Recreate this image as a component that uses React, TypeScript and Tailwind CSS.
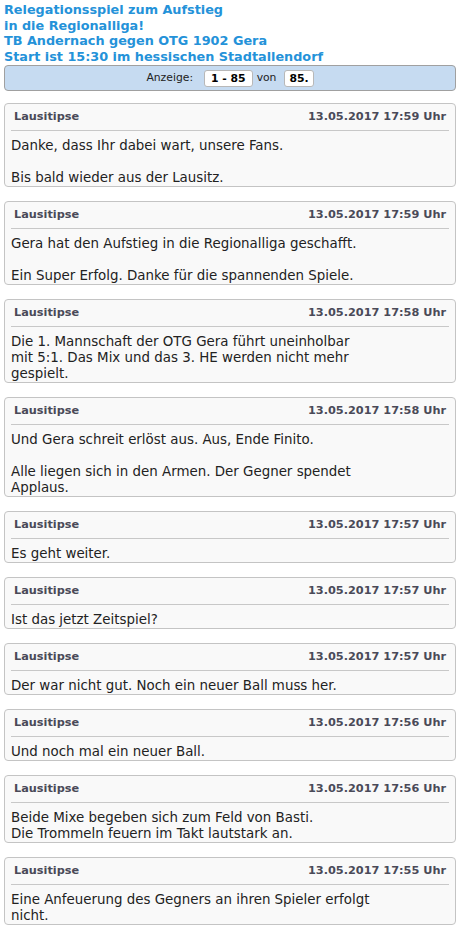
const posts: { date: string; lines: string[] }[] = [
  { date: "13.05.2017 17:59 Uhr", lines: ["Danke, dass Ihr dabei wart, unsere Fans.", "", "Bis bald wieder aus der Lausitz."] },
  { date: "13.05.2017 17:59 Uhr", lines: ["Gera hat den Aufstieg in die Regionalliga geschafft.", "", "Ein Super Erfolg. Danke für die spannenden Spiele."] },
  {
    date: "13.05.2017 17:58 Uhr",
    lines: ["Die 1. Mannschaft der OTG Gera führt uneinholbar", "mit 5:1. Das Mix und das 3. HE werden nicht mehr", "gespielt."],
  },
  {
    date: "13.05.2017 17:58 Uhr",
    lines: ["Und Gera schreit erlöst aus. Aus, Ende Finito.", "", "Alle liegen sich in den Armen. Der Gegner spendet", "Applaus."],
  },
  { date: "13.05.2017 17:57 Uhr", lines: ["Es geht weiter."] },
  { date: "13.05.2017 17:57 Uhr", lines: ["Ist das jetzt Zeitspiel?"] },
  { date: "13.05.2017 17:57 Uhr", lines: ["Der war nicht gut. Noch ein neuer Ball muss her."] },
  { date: "13.05.2017 17:56 Uhr", lines: ["Und noch mal ein neuer Ball."] },
  { date: "13.05.2017 17:56 Uhr", lines: ["Beide Mixe begeben sich zum Feld von Basti.", "Die Trommeln feuern im Takt lautstark an."] },
  { date: "13.05.2017 17:55 Uhr", lines: ["Eine Anfeuerung des Gegners an ihren Spieler erfolgt", "nicht."] },
]

function Post({ date, lines }: { date: string; lines: string[] }) {
  return (
    <div className="mb-[14px] rounded-[4px] border border-[#c4c4c4] bg-[#f9f9f9] px-[6px] pt-[5px]">
      <div className="flex justify-between border-b border-[#c8c8c8] pb-[5px] pl-[3px] pr-[3px] text-[11.3px] leading-[16px] font-bold text-[#4a4a58]">
        <span>Lausitipse</span>
        <span>{date}</span>
      </div>
      <div className="mt-[7px] text-[13.4px] leading-[16px] text-[#222]">
        {lines.map((l, i) => (
          <div key={i} className="h-[16px] whitespace-nowrap">
            {l}
          </div>
        ))}
      </div>
    </div>
  )
}

export default function App() {
  return (
    <div className="w-[460px] bg-white px-[4px] pt-[2px] font-['DejaVu_Sans',Verdana,sans-serif]">
      <div className="text-[12.8px] leading-[15.6px] font-bold text-[#2492d9]">
        Relegationsspiel zum Aufstieg
        <br />
        in die Regionalliga!
        <br />
        TB Andernach gegen OTG 1902 Gera
        <br />
        Start ist 15:30 im hessischen Stadtallendorf
      </div>
      <div className="mt-[1px] mb-[12px] flex h-[26px] items-center justify-center rounded-[4px] border border-[#a0a0a0] bg-[#c6dbf1] text-[10.8px] text-[#222]">
        <span>Anzeige:</span>
        <span className="ml-[11px] rounded-[3px] border border-[#b8b8b8] bg-white px-[6px] leading-[15px] font-bold text-black">1 - 85</span>
        <span className="ml-[4px]">von</span>
        <span className="ml-[8px] rounded-[3px] border border-[#b8b8b8] bg-white px-[4px] leading-[15px] font-bold text-black">85.</span>
      </div>
      {posts.map((p, i) => (
        <Post key={i} date={p.date} lines={p.lines} />
      ))}
    </div>
  )
}
